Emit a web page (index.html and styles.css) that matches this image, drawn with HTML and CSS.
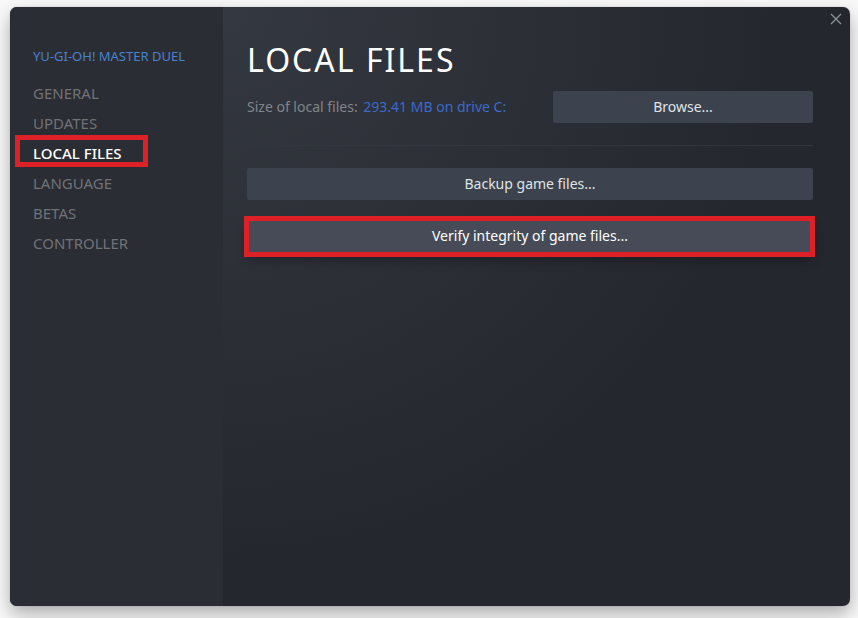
FILE: index.html
```html
<!DOCTYPE html>
<html lang="en">
<head>
<meta charset="utf-8">
<meta name="viewport" content="width=device-width, initial-scale=1">
<title>Local Files</title>
<link rel="stylesheet" href="styles.css">
</head>
<body>
<div class="dialog">
  <aside class="sidebar">
    <div class="game-name">YU-GI-OH! MASTER DUEL</div>
    <nav class="nav">
      <a class="nav-item" href="#general">GENERAL</a>
      <a class="nav-item" href="#updates">UPDATES</a>
      <a class="nav-item active" href="#local-files" aria-current="page">LOCAL FILES</a>
      <a class="nav-item" href="#language">LANGUAGE</a>
      <a class="nav-item" href="#betas">BETAS</a>
      <a class="nav-item" href="#controller">CONTROLLER</a>
    </nav>
  </aside>
  <main class="content">
    <h1 class="title">LOCAL FILES</h1>
    <div class="size-row">
      <p class="size">Size of local files: <span class="size-value">293.41 MB on drive C:</span></p>
      <button class="button" type="button">Browse...</button>
    </div>
    <div class="actions">
      <button class="button" type="button">Backup game files...</button>
      <button class="button hovered" type="button">Verify integrity of game files...</button>
    </div>
  </main>
  <button class="close" type="button" aria-label="Close">
    <svg viewBox="0 0 12 12" width="12" height="12" aria-hidden="true"><path d="M1 1 11 11M11 1 1 11" fill="none" stroke="currentColor" stroke-width="1.3"/></svg>
  </button>
</div>
</body>
</html>
```
FILE: styles.css
```css
* {
  box-sizing: border-box;
}

body {
  margin: 0;
  min-height: 100vh;
  padding: 7px 8px 12px 10px;
  display: flex;
  background: #f8f8f8;
  font-family: "Noto Sans", sans-serif;
  font-size: 14px;
  line-height: 20px;
}

.dialog {
  position: relative;
  flex: 1;
  display: grid;
  grid-template-columns: 213px 1fr;
  border-radius: 7px;
  overflow: hidden;
  background: radial-gradient(circle at 213px 0, #343840 0, #24272e 560px);
  box-shadow: 0 0 1px #777, 0 8px 18px rgba(0, 0, 0, 0.3);
}

.sidebar {
  padding: 39px 23px;
  background: #2a2d34;
}

.game-name {
  margin-bottom: 12px;
  color: #4a82cc;
  font-size: 13px;
  white-space: nowrap;
}

.nav {
  display: flex;
  flex-direction: column;
  font-size: 15px;
}

.nav-item {
  position: relative;
  padding: 5px 0;
  color: #707276;
  text-decoration: none;
}

.nav-item.active {
  color: #fff;
  font-weight: 500;
}

.nav-item.active::after {
  content: "";
  position: absolute;
  inset: -3px 52px 1px -18px;
  border: 5px solid #de2027;
}

.content {
  padding: 33px 37px 32px 24px;
}

.title {
  margin: 0 0 11px;
  color: #fff;
  font-size: 32px;
  line-height: 40px;
  font-weight: 400;
  letter-spacing: 2px;
}

.size-row {
  display: grid;
  grid-template-columns: 1fr 260px;
  padding-bottom: 22px;
  border-bottom: 1px solid #32363e;
}

.size {
  margin: 0;
  align-self: center;
  color: #81848a;
}

.size-value {
  margin-left: 2px;
  color: #3c6acb;
}

.actions {
  display: grid;
  gap: 20px;
  padding-top: 22px;
}

.button {
  position: relative;
  height: 32px;
  padding: 0;
  border: 0;
  border-radius: 2px;
  background: #3d434e;
  color: #dfe3e6;
  font: inherit;
}

.button.hovered {
  background: #464b57;
  color: #fff;
  box-shadow: 0 8px 12px rgba(0, 0, 0, 0.3);
}

.button.hovered::after {
  content: "";
  position: absolute;
  inset: -4px -2px -5px -3px;
  border: 5px solid #de2027;
}

.close {
  position: absolute;
  top: 0;
  right: 2px;
  display: grid;
  place-items: center;
  width: 24px;
  height: 24px;
  padding: 0;
  border: 0;
  background: none;
  color: #8b929b;
}
```
